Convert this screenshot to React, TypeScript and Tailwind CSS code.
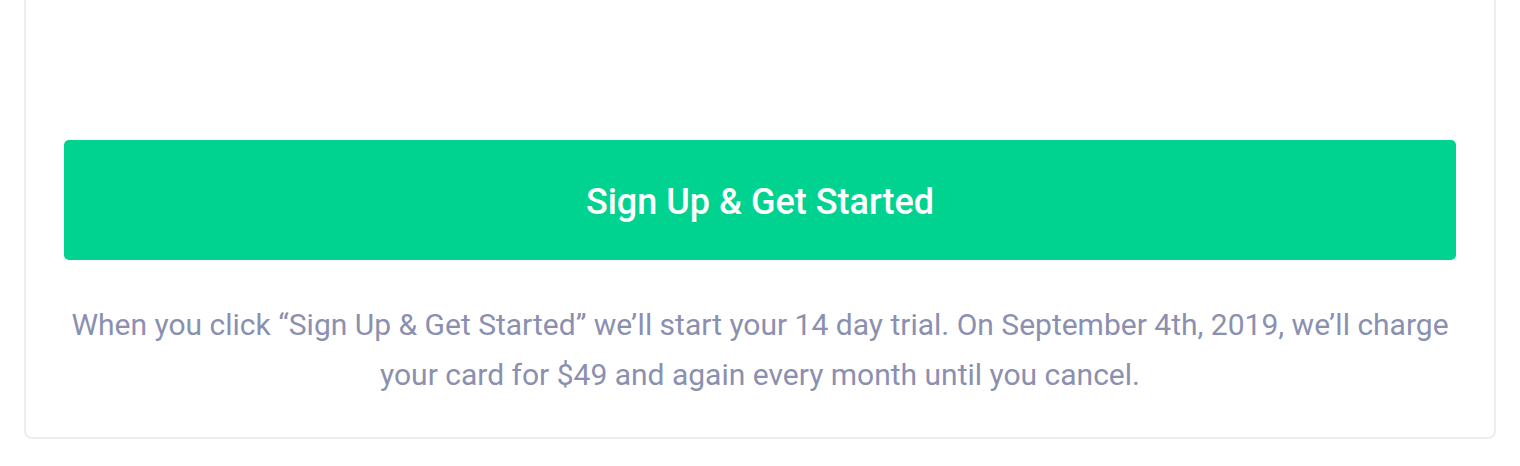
export default function App() {
  return (
    <div className="min-h-[466px] bg-white px-6 font-['Roboto',sans-serif]">
      <div className="rounded-b-lg border-x-2 border-b-2 border-[#ececf3] bg-white px-[38px] pt-[140px] pb-[37px]">
        <button className="flex h-[120px] w-full items-center justify-center rounded-[5px] bg-[#00d38f] pt-[3px] text-[36px] font-medium text-white">
          Sign Up &amp; Get Started
        </button>
        <p className="mt-10 text-center text-[30px] leading-[50px] text-[#8b90b0]">
          When you click “Sign Up &amp; Get Started” we’ll start your 14 day trial. On September 4th, 2019, we’ll charge
          <br />
          your card for $49 and again every month until you cancel.
        </p>
      </div>
    </div>
  );
}
